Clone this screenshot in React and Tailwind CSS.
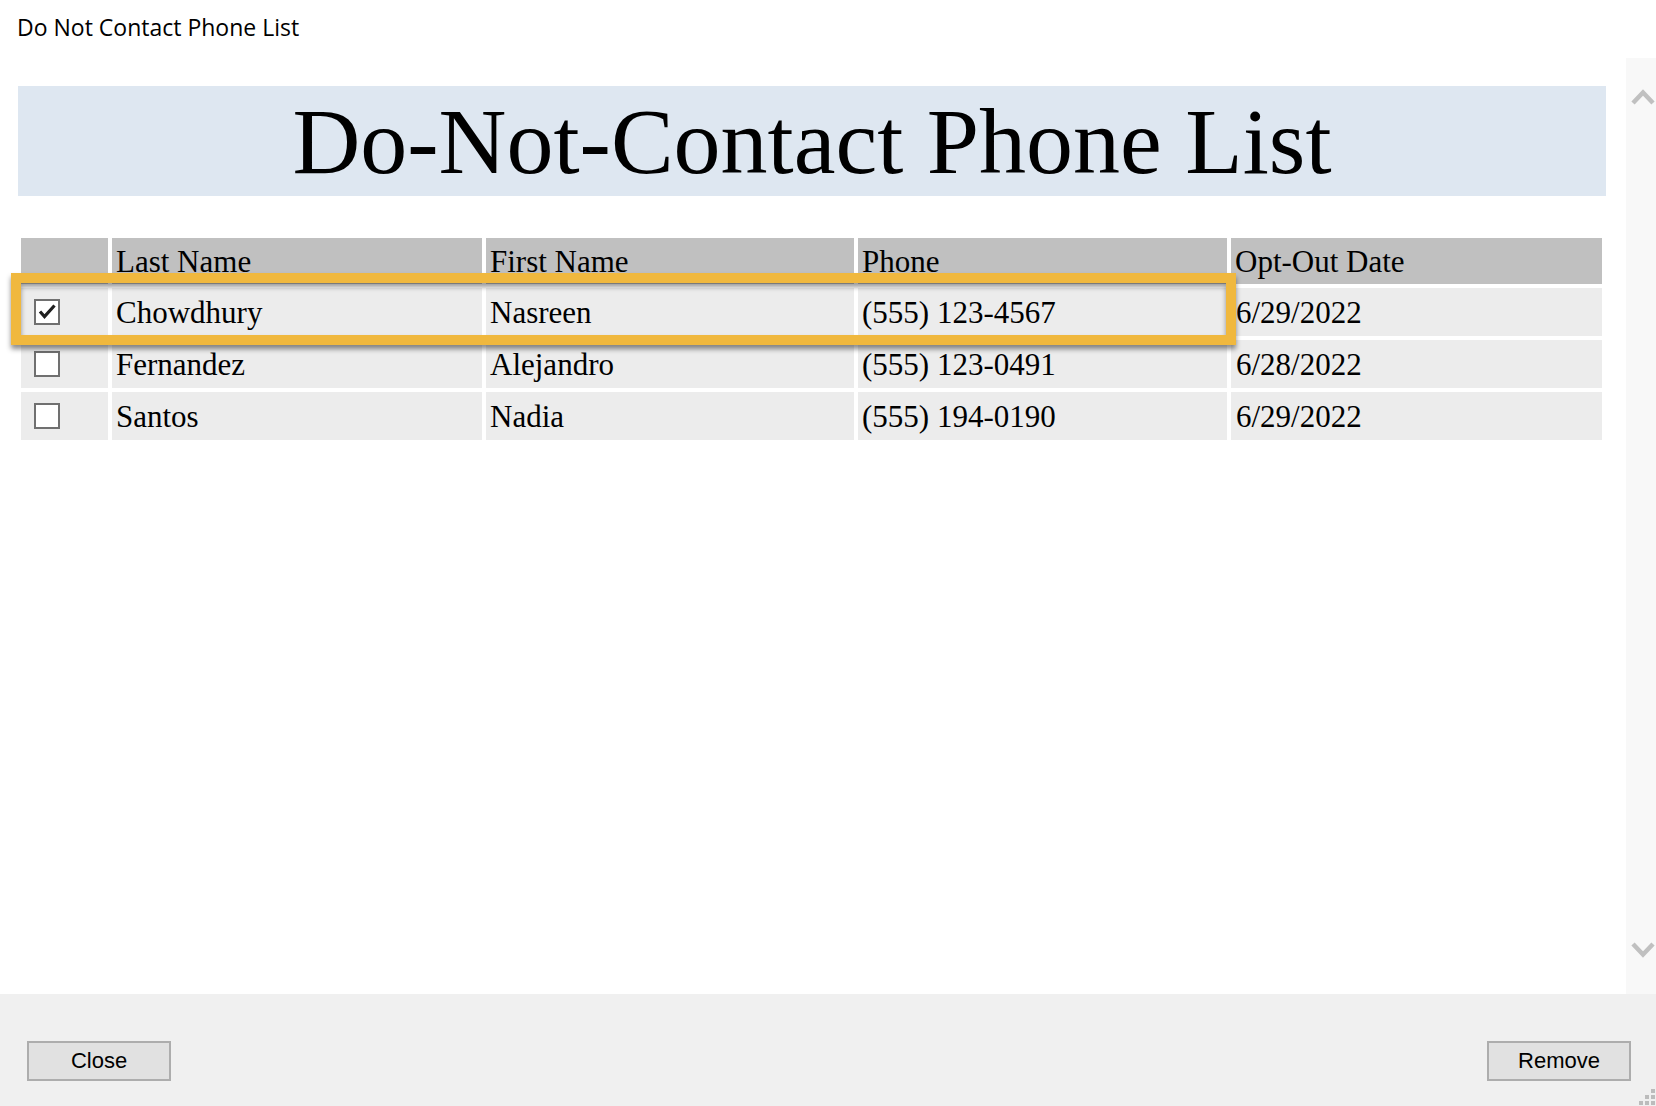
import React from "react";

const rows = [
  { checked: true, last: "Chowdhury", first: "Nasreen", phone: "(555) 123-4567", date: "6/29/2022" },
  { checked: false, last: "Fernandez", first: "Alejandro", phone: "(555) 123-0491", date: "6/28/2022" },
  { checked: false, last: "Santos", first: "Nadia", phone: "(555) 194-0190", date: "6/29/2022" },
];

const Checkbox = ({ checked }) => (
  <div className="relative ml-[13px] w-[26px] h-[26px] border-[2.5px] border-[#707070] bg-white">
    {checked && (
      <svg className="absolute -left-[2.5px] -top-[2.5px]" width="26" height="26" viewBox="0 0 26 26">
        <path d="M6 12.5 L10.5 17.5 L20.5 6.5" fill="none" stroke="#1f1f1f" strokeWidth="3.2" />
      </svg>
    )}
  </div>
);

const Button = ({ children }) => (
  <button className="w-[144px] h-[40px] border-2 border-[#adadad] bg-[#e1e1e1] font-['Liberation_Sans'] text-[22px] text-black leading-none">
    {children}
  </button>
);

export default function App() {
  return (
    <div className="w-[1656px] h-[1106px] bg-white relative overflow-hidden flex flex-col">
      <div className="h-[58px] pl-[17px] pt-[11px] font-['Open_Sans'] text-[23px] leading-[32px] text-black">
        Do Not Contact Phone List
      </div>

      <div className="flex h-[936px]">
        <main className="relative w-[1626px] pt-[28px]">
          <div className="ml-[18px] w-[1588px] h-[110px] bg-[#dee7f1] flex items-center justify-center">
            <h1 className="font-['Liberation_Serif'] text-[94px] leading-none text-black">
              Do-Not-Contact Phone List
            </h1>
          </div>

          <div className="mt-[42px] ml-[21px] grid grid-cols-[87px_370px_368px_369px_371px] gap-1 font-['Liberation_Serif'] text-[31px] leading-none text-black">
            <div className="h-[46px] bg-[#c0c0c0]" />
            {["Last Name", "First Name", "Phone", "Opt-Out Date"].map((h) => (
              <div key={h} className="h-[46px] bg-[#c0c0c0] flex items-center pl-[4px]">
                {h}
              </div>
            ))}
            {rows.map((r) => (
              <React.Fragment key={r.last}>
                <div className="h-[48px] bg-[#ececec] flex items-center">
                  <Checkbox checked={r.checked} />
                </div>
                <div className="h-[48px] bg-[#ececec] flex items-center pl-[4px]">{r.last}</div>
                <div className="h-[48px] bg-[#ececec] flex items-center pl-[4px]">{r.first}</div>
                <div className="h-[48px] bg-[#ececec] flex items-center pl-[4px]">{r.phone}</div>
                <div className="h-[48px] bg-[#ececec] flex items-center pl-[5px]">{r.date}</div>
              </React.Fragment>
            ))}
          </div>

          {/* highlight around the selected row */}
          <div className="absolute top-[215px] left-[11px] w-[1225px] h-[72px] border-[10px] border-[#f0b83e] shadow-[0_4px_5px_rgba(0,0,0,0.45),inset_0_4px_5px_rgba(0,0,0,0.4)]" />
        </main>

        <aside className="relative w-[30px] bg-[#f8f8f8]">
          <svg className="absolute left-0 top-[28px]" width="30" height="24" viewBox="0 0 30 24">
            <path d="M7 17 L17 6.5 L27 17" fill="none" stroke="#c0c0c0" strokeWidth="4.5" />
          </svg>
          <svg className="absolute left-0 top-[880px]" width="30" height="24" viewBox="0 0 30 24">
            <path d="M7 6 L17 16.5 L27 6" fill="none" stroke="#c0c0c0" strokeWidth="4.5" />
          </svg>
        </aside>
      </div>

      <footer className="flex-1 bg-[#f0f0f0] flex justify-between items-start pt-[47px] pl-[27px] pr-[25px]">
        <Button>Close</Button>
        <Button>Remove</Button>
      </footer>

      {/* size grip */}
      <svg className="absolute right-0 bottom-0" width="18" height="18" viewBox="0 0 18 18">
        <rect x="13" y="1" width="4" height="4" fill="#bcbcbc" />
        <rect x="7" y="7" width="4" height="4" fill="#bcbcbc" />
        <rect x="13" y="7" width="4" height="4" fill="#bcbcbc" />
        <rect x="1" y="13" width="4" height="4" fill="#bcbcbc" />
        <rect x="7" y="13" width="4" height="4" fill="#bcbcbc" />
        <rect x="13" y="13" width="4" height="4" fill="#bcbcbc" />
      </svg>
    </div>
  );
}
